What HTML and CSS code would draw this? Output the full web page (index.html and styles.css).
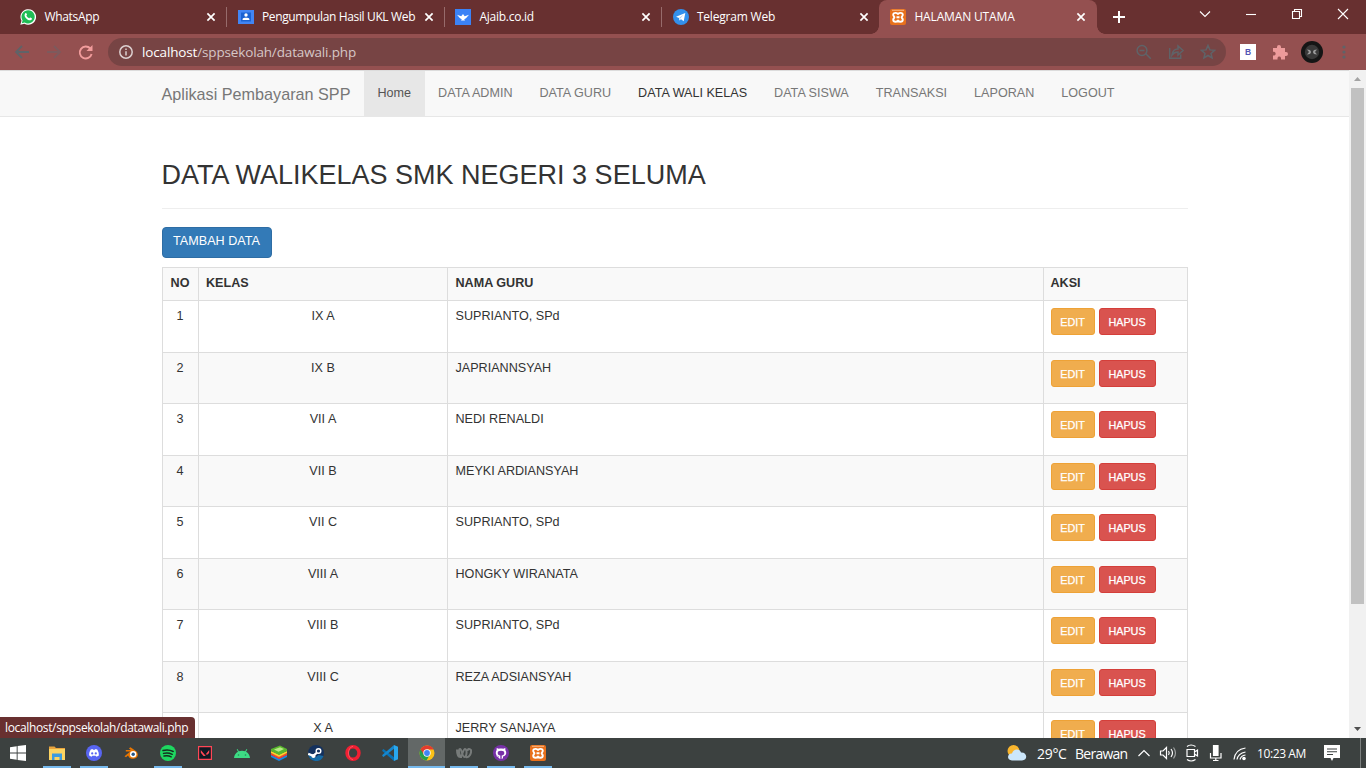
FILE: index.html
```html
<!DOCTYPE html>
<html lang="id">
<head>
<meta charset="utf-8">
<title>HALAMAN UTAMA</title>
<link rel="stylesheet" href="styles.css">
</head>
<body>
<svg class="defs" width="0" height="0">
  <symbol id="close" viewBox="0 0 10 10"><path d="M1.400 1.400 8.600 8.600M8.600 1.400 1.400 8.600" stroke="#fff" stroke-width="1.700" fill="none"/></symbol>
  <symbol id="xampp" viewBox="0 0 16 16"><rect width="16" height="16" rx="2" fill="#e8701c"/><path d="M2 1.300h12" stroke="#fbc9a0" stroke-width=".8"/><path d="M8 5.800C7.800 3.200 3.200 3.200 3.200 5.800c0 1.400 1.200 1.500 1.200 2.500s-1.200 1-1.200 2.400c0 2.800 4.800 2.800 4.800 0 0 2.800 4.800 2.800 4.800 0 0-1.400-1.200-1.400-1.200-2.400s1.200-1.100 1.200-2.500C12.800 3.200 8.200 3.200 8 5.800zM6.500 8.200h3" fill="none" stroke="#fff" stroke-width="1.900"/></symbol>
</svg>

<header class="tabs">
  <div class="tab">
    <svg class="fav" viewBox="0 0 16 16"><path d="M.3 15.700 1.500 11.800A7.800 7.800 0 1 1 4.400 14.700z" fill="#fff"/><path d="M1.700 14.300 2.600 11.500A6.600 6.600 0 1 1 4.700 13.500z" fill="#1fbd55"/><path d="M5.300 4.200c.5-.5 1-.3 1.200.2l.5 1.200c.1.300-.5.800-.6 1.100.6 1.300 1.500 2 2.800 2.600.4-.1.800-.9 1.100-.8l1.500.8c.4.400-.1 1.500-.7 1.800-2.300 1.300-6.800-2.500-6.500-5.200.1-.7.400-1.300.7-1.700z" fill="#fff"/></svg>
    <span class="tab-title t1">WhatsApp</span><svg class="x"><use href="#close"/></svg>
  </div>
  <div class="tab sep">
    <svg class="fav" viewBox="0 0 16 16"><path d="M0 1h16v14H0z" fill="#4285f4"/><path d="M3 3.500h10v9H3z" fill="#1a62d2"/><circle cx="8" cy="6" r="1.700" fill="#fff"/><path d="M4.600 11V9.900C5.200 8.500 10.800 8.500 11.400 9.900V11z" fill="#fff"/></svg>
    <span class="tab-title t2">Pengumpulan Hasil UKL Web</span><svg class="x"><use href="#close"/></svg>
  </div>
  <div class="tab sep">
    <svg class="fav" viewBox="0 0 16 16"><path d="M0 0h16v16H0z" fill="#3b82f6"/><path d="M2 5.800 6.200 7.200 8 5l1.700 2.200L14 5.800 11 9.300 9.200 10.300 10 11.500H6l.8-1.200L5 9.300z" fill="#fff"/></svg>
    <span class="tab-title t3">Ajaib.co.id</span><svg class="x"><use href="#close"/></svg>
  </div>
  <div class="tab sep">
    <svg class="fav" viewBox="0 0 16 16"><circle cx="8" cy="8" r="8" fill="#3390ec"/><path d="M3 7.800 12.300 4 10.700 12.200 8 10.200 6.400 11.500 6 9z" fill="#fff"/><path d="M6 9 10.500 5.800 7 9.700z" fill="#a9cdf5"/></svg>
    <span class="tab-title t4">Telegram Web</span><svg class="x"><use href="#close"/></svg>
  </div>
  <div class="tab active">
    <svg class="fav"><use href="#xampp"/></svg>
    <span class="tab-title t5">HALAMAN UTAMA</span><svg class="x"><use href="#close"/></svg>
  </div>
  <svg class="plus" viewBox="0 0 12 12"><path d="M6 0v12M0 6h12" stroke="#fff" stroke-width="2"/></svg>
  <div class="window-controls">
    <svg viewBox="0 0 46 28"><path d="m18 11.500 5 5 5-5" /></svg>
    <svg viewBox="0 0 46 28"><path d="M18 14.500h10"/></svg>
    <svg viewBox="0 0 46 28"><path d="M18.500 11.500h7v7h-7zM20.500 11.500v-2h7v7h-2"/></svg>
    <svg viewBox="0 0 46 28"><path d="m18 9 10 10M28 9 18 19"/></svg>
  </div>
</header>

<div class="toolbar">
  <svg class="nav-icon" viewBox="0 0 32 28"><path d="M29 14H16M22 8l-6 6 6 6" fill="none" stroke="#5f6368" stroke-width="1.800"/></svg>
  <svg class="nav-icon" viewBox="0 0 32 28"><path d="M15 14h13M22 8l6 6-6 6" fill="none" stroke="#7d5a5d" stroke-width="1.800"/></svg>
  <svg class="nav-icon" viewBox="0 0 32 28"><path d="M26.300 10.500A6 6 0 1 0 27.600 16" fill="none" stroke="#f29c9c" stroke-width="1.900"/><path d="M28.500 7v6h-6z" fill="#f29c9c"/></svg>
  <div class="omnibox">
    <svg class="info" viewBox="0 0 14 14"><circle cx="7" cy="7" r="6.200" fill="none" stroke="#dcd0d0" stroke-width="1.500"/><path d="M7 6.200v4.300M7 3.500v1.500" stroke="#dcd0d0" stroke-width="1.500"/></svg>
    <span class="url"><b>localhost</b>/sppsekolah/datawali.php</span>
    <svg class="omni-icon" viewBox="0 0 32 28"><path d="m17.800 15.800 5 5M11.500 12.500h5" /><circle cx="14" cy="12.500" r="4.900"/></svg>
    <svg class="omni-icon" viewBox="0 0 32 28"><path d="M9.700 10v10.300h11V16.500M12 17c.5-4 3-6 6-6V8l5 4.500-5 4.500v-3c-3 0-4.500 1-6 3z"/></svg>
    <svg class="omni-icon" viewBox="0 0 32 28"><path d="m16 7.500 1.900 4.400 4.700.4-3.600 3.100 1.100 4.600-4.100-2.500-4.100 2.500 1.100-4.600-3.600-3.100 4.700-.4z"/></svg>
  </div>
  <span class="ext-b">B</span>
  <svg class="puzzle" viewBox="0 0 16 16"><path d="M1 4h4V3a2 2 0 0 1 4 0v1h4v4h1a1.900 1.900 0 0 1 0 4h-1v3.500H9V14a1.800 1.800 0 0 0-3.500 0v1.500H1v-4h1.200a1.900 1.900 0 0 0 0-3.700H1z" fill="#ed9b9b"/></svg>
  <svg class="avatar" viewBox="0 0 22 22"><circle cx="11" cy="11" r="11" fill="#151515"/><circle cx="11" cy="11" r="7.200" fill="#393939"/><path d="M6 8.500c2.500 0 4 .8 4 2.500s-1.500 2.500-4 2.500L8 11zM16 8.500c-2.500 0-4 .8-4 2.500s1.500 2.500 4 2.500L14 11z" fill="#999"/></svg>
  <svg class="dots" viewBox="0 0 4 14"><g fill="#5f6368"><circle cx="2" cy="2" r="1.600"/><circle cx="2" cy="7" r="1.600"/><circle cx="2" cy="12" r="1.600"/></g></svg>
</div>

<main class="viewport">
  <div class="page">
    <nav class="navbar">
      <div class="container">
        <a class="brand">Aplikasi Pembayaran SPP</a>
        <a class="link home">Home</a><a class="link">DATA ADMIN</a><a class="link">DATA GURU</a><a class="link hover">DATA WALI KELAS</a><a class="link">DATA SISWA</a><a class="link">TRANSAKSI</a><a class="link">LAPORAN</a><a class="link">LOGOUT</a>
      </div>
    </nav>
    <section class="container content">
      <h2>DATA WALIKELAS SMK NEGERI 3 SELUMA</h2>
      <a class="add">TAMBAH DATA</a>
      <table>
        <colgroup><col class="c-no"><col class="c-kelas"><col class="c-guru"><col class="c-aksi"></colgroup>
        <tr class="head"><th>NO</th><th>KELAS</th><th>NAMA GURU</th><th>AKSI</th></tr>
        <tr><td>1</td><td>IX A</td><td>SUPRIANTO, SPd</td><td><a class="btn edit">EDIT</a><a class="btn del">HAPUS</a></td></tr>
        <tr><td>2</td><td>IX B</td><td>JAPRIANNSYAH</td><td><a class="btn edit">EDIT</a><a class="btn del">HAPUS</a></td></tr>
        <tr><td>3</td><td>VII A</td><td>NEDI RENALDI</td><td><a class="btn edit">EDIT</a><a class="btn del">HAPUS</a></td></tr>
        <tr><td>4</td><td>VII B</td><td>MEYKI ARDIANSYAH</td><td><a class="btn edit">EDIT</a><a class="btn del">HAPUS</a></td></tr>
        <tr><td>5</td><td>VII C</td><td>SUPRIANTO, SPd</td><td><a class="btn edit">EDIT</a><a class="btn del">HAPUS</a></td></tr>
        <tr><td>6</td><td>VIII A</td><td>HONGKY WIRANATA</td><td><a class="btn edit">EDIT</a><a class="btn del">HAPUS</a></td></tr>
        <tr><td>7</td><td>VIII B</td><td>SUPRIANTO, SPd</td><td><a class="btn edit">EDIT</a><a class="btn del">HAPUS</a></td></tr>
        <tr><td>8</td><td>VIII C</td><td>REZA ADSIANSYAH</td><td><a class="btn edit">EDIT</a><a class="btn del">HAPUS</a></td></tr>
        <tr><td></td><td>X A</td><td>JERRY SANJAYA</td><td><a class="btn edit">EDIT</a><a class="btn del">HAPUS</a></td></tr>
      </table>
    </section>
  </div>
  <div class="scrollbar">
    <svg viewBox="0 0 17 17"><path d="m5 11 3.500-4 3.500 4z" fill="#a3a3a3"/></svg>
    <div class="thumb"></div>
    <svg viewBox="0 0 17 17"><path d="m5 6 3.500 4L12 6z" fill="#505050"/></svg>
  </div>
  <div class="status"><span>localhost/sppsekolah/datawali.php</span></div>
</main>

<footer class="taskbar">
  <div class="start"><svg viewBox="0 0 16 16"><path d="M0 2.200 6.700 1.200V7.600H0zM7.600 1.100 16 0v7.600H7.600zM0 8.500h6.700v6.300L0 13.800zM7.600 8.500H16V16l-8.400-1.100z" fill="#fff"/></svg></div>
  <div class="app open"><svg viewBox="0 0 16 16"><path d="M0 1.500h5.500L7 3h9v5H0z" fill="#e8a33d"/><path d="M0 4h16v11H0z" fill="#fcd462"/><path d="M3 8.500h10V15h-2.500v-3h-5v3H3z" fill="#3c9be0"/></svg></div>
  <div class="app open"><svg viewBox="0 0 16 16"><circle cx="8" cy="8" r="8" fill="#5865f2"/><path d="M4.800 4.600 6.500 4l.5.700h2l.5-.7 1.700.6c1.200 1.800 1.800 3.800 1.600 6-1 .8-1.800 1.100-2.400 1.200l-.7-1H6.300l-.7 1c-.7-.1-1.500-.4-2.400-1.200-.2-2.200.4-4.200 1.600-6z" fill="#fff"/><circle cx="6.200" cy="8.400" r="1.100" fill="#5865f2"/><circle cx="9.800" cy="8.400" r="1.100" fill="#5865f2"/></svg></div>
  <div class="app"><svg viewBox="0 0 16 16"><path d="M1.500 11.200 7.300 6.500H2.800V5h5L5.900 3.200 7.500 2.200 13.500 6.500C18 12 10 16 6.200 12.500L5 10.500 3 12.300z" fill="#ea7600"/><circle cx="10.200" cy="9.300" r="3.200" fill="#fff"/><circle cx="10.200" cy="9.300" r="1.700" fill="#265787"/></svg></div>
  <div class="app open"><svg viewBox="0 0 16 16"><circle cx="8" cy="8" r="8" fill="#1ed760"/><path d="M3 5.500c3.500-1 7-.7 10.200 1M3.500 8.400c3-.8 6-.5 8.700.9M4 11c2.600-.6 5-.4 7.200.8" fill="none" stroke="#14301f" stroke-width="1.500" stroke-linecap="round"/></svg></div>
  <div class="app"><svg viewBox="0 0 16 16"><path d="M1.600 1.600h12.800v12.800H1.600z" fill="#0f1923" stroke="#ff4655" stroke-width="1.200"/><path d="m3.800 5 5 6H6.500L3.800 7.800zM12.200 5v2.800L10.800 9.500H8.600z" fill="#ff4655"/></svg></div>
  <div class="app"><svg viewBox="0 0 16 16"><path d="M0 13c.2-3 1.800-5.200 4-6.300L2.700 4.400l.8-.4 1.300 2.300c2-.8 4.400-.8 6.400 0L12.500 4l.8.400L12 6.700c2.200 1.100 3.800 3.300 4 6.300z" fill="#3ddc84"/><circle cx="4.500" cy="10" r=".8" fill="#285"/><circle cx="11.500" cy="10" r=".8" fill="#285"/></svg></div>
  <div class="app"><svg viewBox="0 0 16 16"><path d="m0 10 8 3.500 8-3.500v2l-8 4-8-4z" fill="#1689e5"/><path d="m0 8 8 3.500L16 8v2l-8 4-8-4z" fill="#f44331"/><path d="m0 6 8 3.500L16 6v2l-8 4-8-4z" fill="#ffd02d"/><path d="m0 4 9-3.500L16 4v2l-8 4-8-4z" fill="#59b72d"/><path d="m3 4.500 6-2.300L13 4 7.500 6.700z" fill="#b8e986"/></svg></div>
  <div class="app"><svg viewBox="0 0 16 16"><circle cx="8" cy="8" r="8" fill="#14315e"/><path d="M.2 9.500A8 8 0 0 0 15.500 11l-5-1-4 3z" fill="#176ba5"/><path d="m.2 8.800 5 2 5-4.200" fill="none" stroke="#fff" stroke-width="2.200"/><circle cx="5.500" cy="11" r="2.100" fill="#fff"/><circle cx="10.500" cy="6" r="2.300" fill="#14315e" stroke="#fff" stroke-width="1.400"/></svg></div>
  <div class="app"><svg viewBox="0 0 16 16"><ellipse cx="8" cy="8" rx="6" ry="6.300" fill="none" stroke="#f21f32" stroke-width="3.400"/><path d="M8 1.300c-6 1-6 12.400 0 13.400" fill="none" stroke="#ff5360" stroke-width="1"/></svg></div>
  <div class="app"><svg viewBox="0 0 16 16"><path d="m.3 5 1.200-1L12 12.300V16L.3 6z" fill="#0873b8"/><path d="m.3 10 11.700-10v3.700L1.500 12l-1.200-1z" fill="#1687ce"/><path d="m12 0 4 1.800v12.400L12 16z" fill="#29a8ef"/></svg></div>
  <div class="app open current"><svg viewBox="0 0 16 16"><circle cx="8" cy="8" r="7.500" fill="#fbc116"/><path d="M8 8 1.500 4.300A7.500 7.500 0 0 0 7.500 15.500l3.300-5.800z" fill="#279e4b"/><path d="M8 4.500h6.700A7.500 7.500 0 0 0 1.500 4.200L5 9.800z" fill="#e33b2e"/><circle cx="8" cy="8" r="3.700" fill="#fff"/><circle cx="8" cy="8" r="2.900" fill="#4285f4"/></svg></div>
  <div class="app open"><svg viewBox="0 0 16 16"><path d="M1 4.500c0 4 1.200 7.500 3.200 7.500S7 4 9 4c2.300 0 2 8-.6 8S6 4 4 4s-1 8 2 8M10 12c3.500 1 5.500-4 5-7-1.500-2-3.500-1-3.500 1" fill="none" stroke="#777b7a" stroke-width="2"/></svg></div>
  <div class="app open"><svg viewBox="0 0 16 16"><circle cx="8" cy="8" r="8" fill="#7730a7"/><path d="M6 13.500v-2C3.800 11 2.600 9.700 2.800 7.600c0-1 .3-1.700.8-2.300L3.700 3l2.100.8c1.500-.4 2.900-.4 4.400 0l2.100-.8.100 2.300c.5.600.8 1.300.8 2.300.2 2.100-1 3.400-3.200 3.900v2z" fill="#fff"/><path d="M7.300 13.500v-3C5.500 10.400 4.700 9.300 4.700 8c0-1.500 1-2.300 3.300-2.300s3.300.8 3.300 2.300c0 1.300-.8 2.400-2.600 2.500v3z" fill="#7730a7"/><path d="M3.500 10.800c1.200.1 1.200 1.600 2.800 1.500" fill="none" stroke="#fff"/></svg></div>
  <div class="app open"><svg><use href="#xampp"/></svg></div>
  <div class="tray">
    <svg class="weather" viewBox="0 0 20 18"><circle cx="6.500" cy="7" r="6" fill="#f9b52d"/><path d="M5 16.500C-1 16 .5 9 5 9.500 6 4.500 13 4 14 8.500c6-.5 7.500 7.500 1 8z" fill="#cce7fb"/></svg>
    <span class="temp">29°C</span><span class="cond">Berawan</span>
    <svg class="cell w1" viewBox="0 0 24 24"><path d="m6.500 15 5.500-5.500 5.500 5.500"/></svg>
    <svg class="cell" viewBox="0 0 24 24"><path d="M4.500 10h2.500l3.500-3.500v11L7 14H4.500zM12.500 10q1.500 2 0 4M15 8q3 4 0 8"/><path d="M17.500 6.500q4 5.500 0 11" opacity=".5"/></svg>
    <svg class="cell" viewBox="0 0 24 24"><path d="M7 8.500h7.500v7H7zM14.500 11l3-2v6l-3-2M7 5.500q4-3 8.500 0M7 18.500q4 3 8.500 0"/></svg>
    <svg class="cell" viewBox="0 0 24 24"><path d="M9.500 4.500h4.500v10H9.500z" fill="#fff"/><path d="M6.500 12v5h10.500v-5M11.800 17v2.500M9 19.500h5.500"/></svg>
    <svg class="cell w2" viewBox="0 0 24 24"><path d="M6 18.500Q7 8.500 17.500 7M9 18.500q1-6 8.500-7.500M12 18.500q1-4 5.500-4.500"/><circle cx="16" cy="17.500" r="1.200" fill="#fff"/></svg>
    <span class="clock">10:23 AM</span>
    <svg class="notice" viewBox="0 0 16 16"><path d="M0 0h16v13H9.500L8 16l-1.500-3H0z" fill="#fff"/><path d="M3 4h10M3 6.700h10M3 9.500h6" stroke="#3c4140" stroke-width="1.100"/></svg>
    <i class="desk"></i>
  </div>
</footer>
</body>
</html>
```
FILE: styles.css
```css
* { box-sizing: border-box; }
body { margin: 0; width: 1366px; height: 768px; overflow: hidden; display: flex; flex-direction: column; font-family: "Open Sans", "Noto Sans", sans-serif; }
svg { display: block; flex: none; }
.defs { position: absolute; }

/* tab strip */
.tabs { height: 34px; flex: none; display: flex; background: #683030; padding-left: 9px; color: #fff; font-size: 12px; }
.tab { width: 217.5px; flex: none; display: flex; align-items: center; padding: 0 10.5px 0 11.4px; position: relative; }
.sep::before { content: ""; position: absolute; left: -.4px; top: 7px; width: 1px; height: 20px; background: #976b6b; }
.fav { width: 16px; height: 16px; }
.tab-title { flex: 1; padding-left: 8px; white-space: nowrap; line-height: 34px; }
.t1 { letter-spacing: -.3px; }
.t2 { letter-spacing: -.36px; }
.t3 { letter-spacing: -.25px; }
.t4 { letter-spacing: -.42px; letter-spacing: -.2px; }
.t5 { letter-spacing: -.15px; }
.x { width: 10px; height: 10px; }
.active { background: #945050; border-radius: 8px 8px 0 0; }
.active::before, .active::after { content: ""; position: absolute; bottom: 0; width: 8px; height: 8px; }
.active::before { left: -8px; background: radial-gradient(circle at 0 0, #683030 7.5px, #945050 8px); }
.active::after { right: -8px; background: radial-gradient(circle at 100% 0, #683030 7.5px, #945050 8px); }
.plus { width: 12px; height: 12px; margin: 11px 0 0 16.500px; }
.window-controls { margin-left: auto; display: flex; }
.window-controls svg { width: 46px; height: 28px; fill: none; stroke: #fff; stroke-width: 1.100; }

/* toolbar */
.toolbar { height: 36px; flex: none; background: #945050; display: flex; align-items: center; }
.nav-icon { width: 32px; height: 28px; }
.omnibox { width: 1118px; height: 28px; margin-left: 12px; flex: none; border-radius: 14px; background: #774444; display: flex; align-items: center; padding: 0 2px 0 11px; }
.info { width: 14px; height: 14px; }
.url { flex: 1; padding-left: 9px; font-size: 13.500px; letter-spacing: -.15px; color: #d6c7c7; white-space: nowrap; }
.url b { font-weight: 400; color: #fff; }
.omni-icon { width: 32px; height: 28px; fill: none; stroke: #5f6368; stroke-width: 1.500; }
.ext-b { width: 16px; height: 16px; margin-left: 14px; flex: none; background: #fff; color: #5555b5; font: bold 8.500px/16px "Liberation Sans", sans-serif; text-align: center; }
.puzzle { width: 16px; height: 16px; margin-left: 16px; }
.avatar { width: 22px; height: 22px; margin-left: 13px; }
.dots { width: 4px; height: 14px; margin-left: 19px; }

/* document */
.viewport { height: 668px; flex: none; display: flex; position: relative; overflow: hidden; background: #fff; }
.page { width: 1349px; flex: none; height: 668px; overflow: hidden; color: #333; font: 12.600px/18px "Liberation Sans", Arial, sans-serif; }
.navbar { height: 47px; background: #f8f8f8; border-top: 1px solid #dcdcdc; border-bottom: 1px solid #e7e7e7; }
.container { width: 1053px; margin: 0 auto; padding: 0 13.500px; }
.navbar .container { display: flex; height: 45px; line-height: 45px; color: #777; white-space: nowrap; }
.brand { font-size: 16.200px; width: 202.500px; flex: none; line-height: 46px; }
.link { padding: 0 13.500px; flex: none; line-height: 45px; }
.home { background: #e7e7e7; color: #555; }
.hover { color: #333; }
h2 { margin: 0 0 18px; height: 92px; padding-top: 43px; border-bottom: 1px solid #eee; font-weight: 400; font-size: 27px; line-height: 30px; white-space: nowrap; }
.add { display: block; width: 110px; height: 31px; background: #337ab7; border: 1px solid #2e6da4; border-radius: 4px; color: #fff; line-height: 26px; text-align: center; margin-bottom: 9px; white-space: nowrap; }
table { border-collapse: collapse; table-layout: fixed; width: 1026px; }
.c-no { width: 36px; }
.c-kelas { width: 249px; }
.c-guru { width: 596px; }
.c-aksi { width: 144px; }
th, td { border: 1px solid #ddd; padding: 6px 7px; height: 51.500px; text-align: left; vertical-align: top; white-space: nowrap; }
th { height: 33px; }
tr:nth-child(odd) { background: #f9f9f9; }
td:nth-child(-n+2), th:first-child { text-align: center; }
th:nth-child(2) { padding-left: 7.500px; }
td:nth-child(2) { padding-left: 8px; }
td:nth-child(3), th:nth-child(3) { padding-left: 8px; }
.btn { display: inline-block; height: 27px; margin: 1px 4px 0 0; border: 1px solid; border-radius: 3px; font-size: 10.800px; line-height: 26px; color: #fff; text-align: center; vertical-align: top; -webkit-text-stroke: .25px #fff; }
.edit { width: 44px; background: #f0ad4e; border-color: #eea236; }
.del { width: 57px; background: #d9534f; border-color: #d43f3a; }
.scrollbar { width: 17px; background: #f1f1f1; display: flex; flex-direction: column; align-items: center; }
.scrollbar svg { width: 17px; height: 17px; }
.thumb { width: 13px; height: 516px; background: #c1c1c1; margin: 1px 0 auto; }
.status { position: absolute; left: 0; bottom: 0; width: 195px; height: 21px; background: #683030; color: #fff; border-radius: 0 4px 0 0; padding-left: 5px; font-size: 12px; line-height: 21px; letter-spacing: -.35px; white-space: nowrap; }

/* taskbar */
.taskbar { height: 30px; flex: none; background: #3c4140; display: flex; color: #fff; }
.start { width: 38px; padding: 7px 0 0 10px; }
.app { width: 37px; flex: none; display: flex; justify-content: center; padding-top: 7px; position: relative; }
.start svg, .app svg { width: 16px; height: 16px; }
.open::after { content: ""; position: absolute; left: 5px; right: 4px; bottom: 0; height: 2px; background: #76b9ed; }
.current { background: #636867; }
.current::after { left: 0; right: 0; }
.tray { margin-left: auto; display: flex; align-items: center; white-space: nowrap; width: 359px; }
.weather { width: 20px; height: 18px; }
.temp { width: 38px; margin-left: 10px; font-size: 14px; letter-spacing: -.3px; }
.cond { width: 57px; font-size: 14px; letter-spacing: -.75px; }
.cell { width: 24px; height: 24px; fill: none; stroke: #fff; stroke-width: 1.200; }
.clock { width: 49px; margin-left: 5px; font-size: 12px; letter-spacing: -.4px; }
.notice { width: 16px; height: 16px; margin-left: 18px; }
.desk { width: 1px; height: 30px; background: #7c807f; margin-left: 20px; }
```
